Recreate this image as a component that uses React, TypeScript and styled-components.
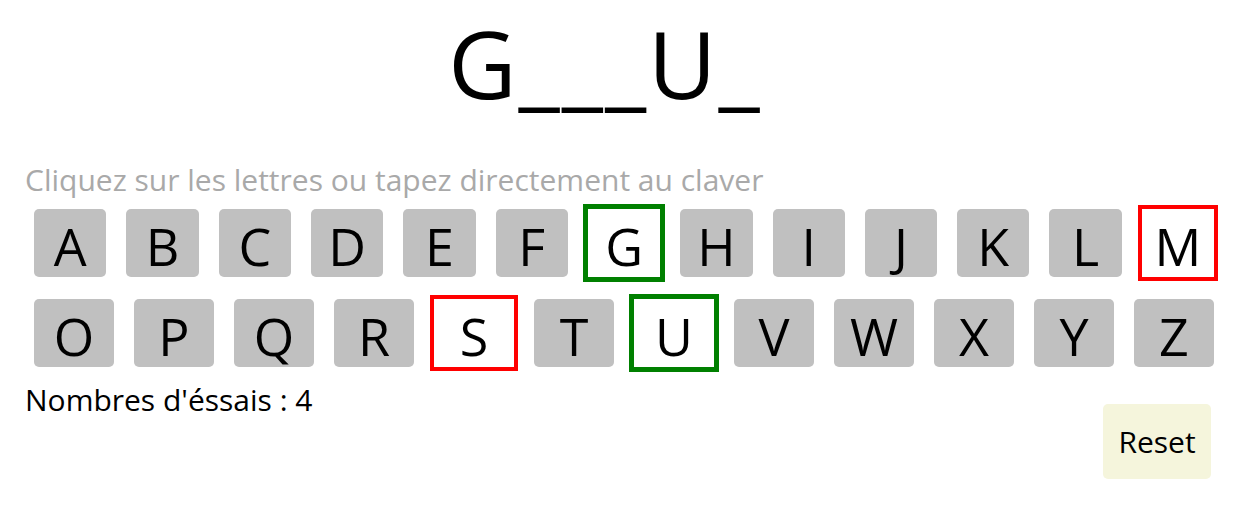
import styled, { createGlobalStyle } from 'styled-components';

const GlobalStyle = createGlobalStyle`
  body {
    margin: 8px;
    background: #ffffff;
    font-family: "Open Sans", "Noto Sans", sans-serif;
    color: #000000;
  }
`;

const Page = styled.div`
  width: 1200px;
  padding: 0 16px;
`;

const Word = styled.h1`
  margin: 0;
  padding-right: 38px;
  font-size: 94px;
  font-weight: 400;
  letter-spacing: 2px;
  line-height: 110px;
  text-align: center;
`;

const Hint = styled.p`
  margin: 44px 0 0 1px;
  font-size: 30px;
  line-height: 36px;
  color: #a9a9a9;
`;

const KeyRow = styled.div<{ $top: number }>`
  display: flex;
  margin-top: ${(p) => p.$top}px;
`;

type KeyState = 'idle' | 'good' | 'bad';

const Key = styled.button<{ $state: KeyState }>`
  flex: 1;
  height: 68px;
  margin: 0 10px;
  padding: 6px 0 0;
  border: none;
  border-radius: ${(p) => (p.$state === 'idle' ? '5px' : '0')};
  background: ${(p) => (p.$state === 'idle' ? '#c0c0c0' : '#ffffff')};
  outline: ${(p) =>
    p.$state === 'good' ? '5px solid #008000' : p.$state === 'bad' ? '4px solid #ff0000' : 'none'};
  font-family: inherit;
  font-size: 52px;
  line-height: 62px;
  color: #000000;
  cursor: pointer;
`;

const Footer = styled.div`
  display: flex;
  justify-content: space-between;
  align-items: flex-start;
  margin-top: 15px;
`;

const Tries = styled.div`
  margin-left: 1px;
  font-size: 30px;
  line-height: 36px;
`;

const ResetButton = styled.button`
  margin: 22px 13px 0 0;
  width: 108px;
  height: 75px;
  padding: 0;
  border: none;
  border-radius: 5px;
  background: #f5f5dc;
  font-family: inherit;
  font-size: 30px;
  color: #000000;
  cursor: pointer;
`;

const rowOne = 'ABCDEFGHIJKLM'.split('');
const rowTwo = 'OPQRSTUVWXYZ'.split('');
const good = ['G', 'U'];
const bad = ['M', 'S'];

const stateOf = (l: string): KeyState => (good.includes(l) ? 'good' : bad.includes(l) ? 'bad' : 'idle');

export default function App() {
  return (
    <>
      <GlobalStyle />
      <Page>
        <Word>G___U_</Word>
        <Hint>Cliquez sur les lettres ou tapez directement au claver</Hint>
        <KeyRow $top={11}>
          {rowOne.map((l) => (
            <Key key={l} $state={stateOf(l)}>
              {l}
            </Key>
          ))}
        </KeyRow>
        <KeyRow $top={22}>
          {rowTwo.map((l) => (
            <Key key={l} $state={stateOf(l)}>
              {l}
            </Key>
          ))}
        </KeyRow>
        <Footer>
          <Tries>Nombres d'éssais : 4</Tries>
          <ResetButton>Reset</ResetButton>
        </Footer>
      </Page>
    </>
  );
}
